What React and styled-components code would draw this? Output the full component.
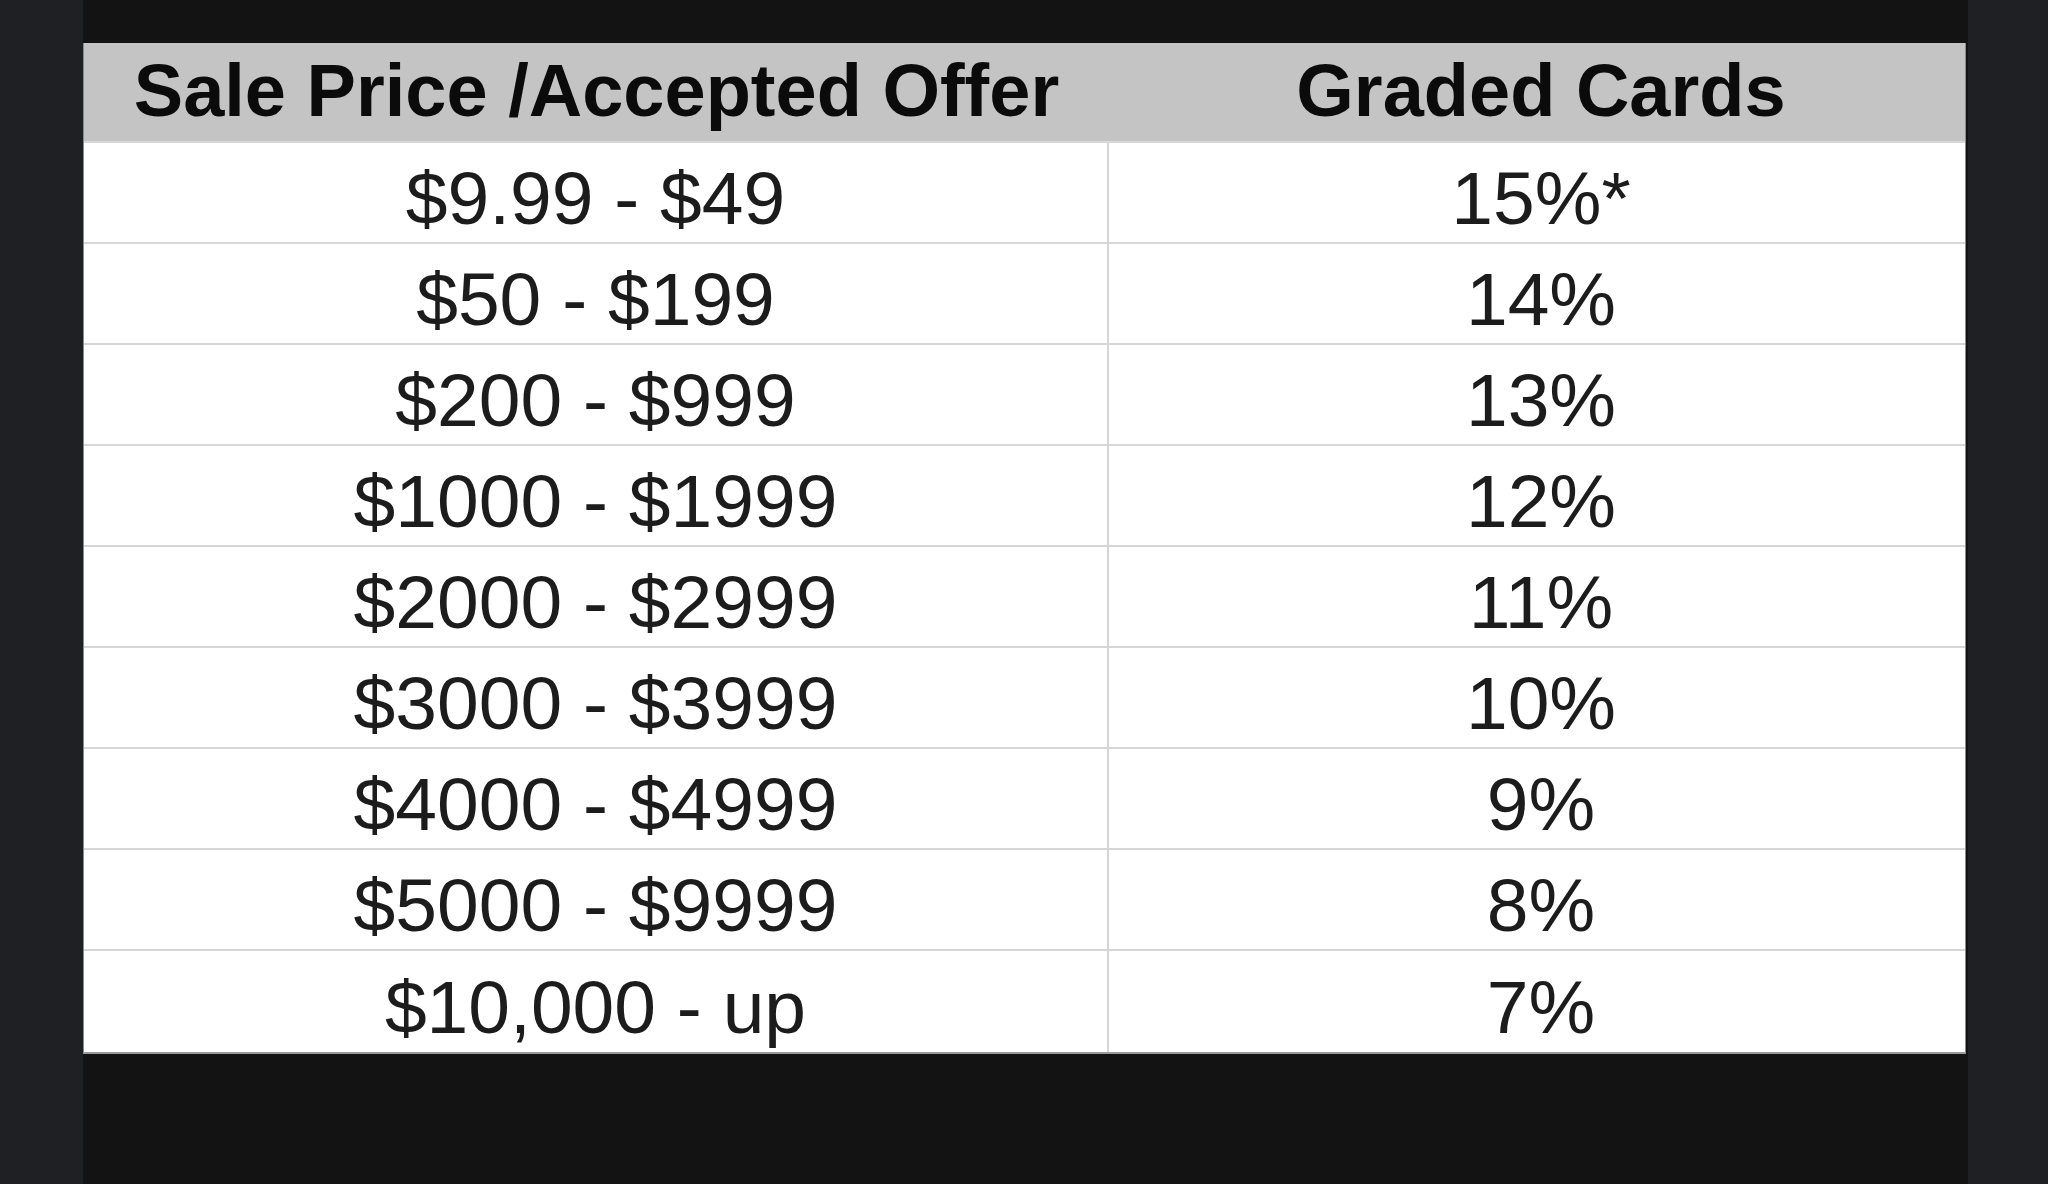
import React from 'react';
import styled, { createGlobalStyle } from 'styled-components';

const GlobalStyle = createGlobalStyle`
  html, body {
    margin: 0;
    padding: 0;
    background-color: #1f2024;
  }
  #root {
    min-height: 100vh;
  }
`;

const StyledPage = styled.div`
  display: flex;
  height: 1184px;
  overflow: hidden;
  background-color: #1f2024;
`;

const StyledFrame = styled.div`
  margin-left: 83px;
  width: 1885px;
  padding-top: 43px;
  background-color: #131313;
`;

const StyledTable = styled.div`
  width: 1883px;
  display: grid;
  grid-template-columns: 1025px 1fr;
  background-color: #ffffff;
  border-left: 1px solid #8a8a8a;
  border-right: 1px solid #8a8a8a;
  border-bottom: 2px solid #9a9a9a;
  box-sizing: border-box;
  font-family: 'Liberation Sans', Arial, sans-serif;
`;

const StyledHeadCell = styled.div`
  height: 100px;
  display: flex;
  align-items: center;
  justify-content: center;
  background-color: #c4c4c4;
  color: #0b0b0b;
  font-size: 74px;
  font-weight: 700;
  padding-bottom: 4px;
  padding-left: ${({ shift }) => (shift ? '8px' : '0')};
  box-sizing: border-box;
  border-bottom: 2px solid #d8d8d8;
  white-space: nowrap;
`;

const StyledCell = styled.div`
  height: 101px;
  display: flex;
  align-items: center;
  justify-content: center;
  color: #1c1c1c;
  font-size: 75px;
  padding-top: 10px;
  padding-left: ${({ shift }) => (shift ? '8px' : '0')};
  box-sizing: border-box;
  border-bottom: ${({ last }) => (last ? 'none' : '2px solid #d6d6d6')};
  border-right: ${({ divider }) => (divider ? '2px solid #d6d6d6' : 'none')};
  white-space: nowrap;
`;

const rows = [
  ['$9.99 - $49', '15%*'],
  ['$50 - $199', '14%'],
  ['$200 - $999', '13%'],
  ['$1000 - $1999', '12%'],
  ['$2000 - $2999', '11%'],
  ['$3000 - $3999', '10%'],
  ['$4000 - $4999', '9%'],
  ['$5000 - $9999', '8%'],
  ['$10,000 - up', '7%'],
];

const App = () => {
  return (
    <StyledPage>
      <GlobalStyle />
      <StyledFrame>
        <StyledTable>
          <StyledHeadCell>Sale Price /Accepted Offer</StyledHeadCell>
          <StyledHeadCell shift>Graded Cards</StyledHeadCell>
          {rows.map(([price, fee], i) => (
            <React.Fragment key={price}>
              <StyledCell divider last={i === rows.length - 1}>
                {price}
              </StyledCell>
              <StyledCell shift last={i === rows.length - 1}>
                {fee}
              </StyledCell>
            </React.Fragment>
          ))}
        </StyledTable>
      </StyledFrame>
    </StyledPage>
  );
};

export default App;
